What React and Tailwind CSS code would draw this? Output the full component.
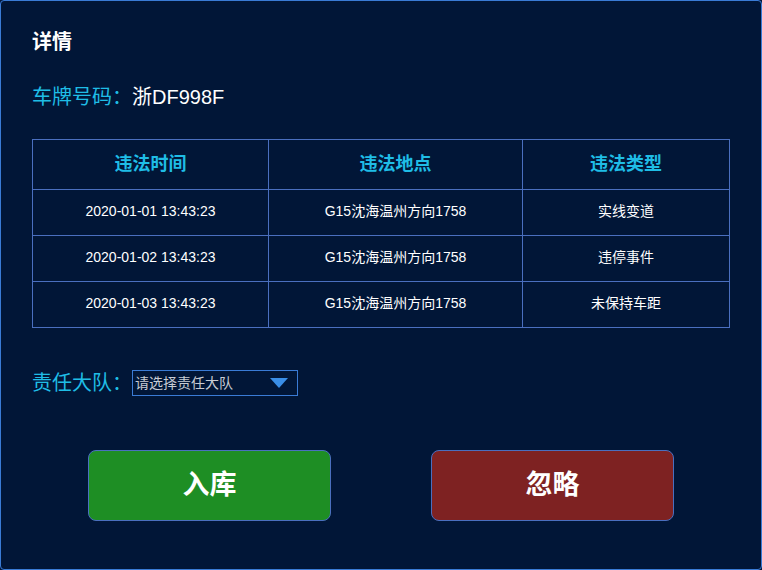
export default function App() {
  const rows = [
    ["2020-01-01 13:43:23", "G15沈海温州方向1758", "实线变道"],
    ["2020-01-02 13:43:23", "G15沈海温州方向1758", "违停事件"],
    ["2020-01-03 13:43:23", "G15沈海温州方向1758", "未保持车距"],
  ];
  const font = { fontFamily: '"Liberation Sans", "Noto Sans CJK SC", sans-serif' };
  return (
    <div style={font} className="w-[762px] h-[570px] bg-[#011637]">
      <div className="w-full h-full border border-[#3a7bd5] rounded-[4px] bg-[#011637] pl-[31px] pr-[31px] pt-[27px]">
        <div className="text-white font-bold text-[20px] leading-[28px]">详情</div>
        <div className="mt-[27px] flex items-center text-[20px] leading-[28px]">
          <span className="text-[#1fbde6]">车牌号码：</span>
          <span className="text-white">浙DF998F</span>
        </div>
        <table className="mt-[28px] w-[698px] border-collapse">
          <thead>
            <tr className="h-[50px]">
              <th className="w-[236px] border border-[#4a6fbf] text-[#1fbde6] text-[18px] font-bold">违法时间</th>
              <th className="w-[254px] border border-[#4a6fbf] text-[#1fbde6] text-[18px] font-bold">违法地点</th>
              <th className="border border-[#4a6fbf] text-[#1fbde6] text-[18px] font-bold">违法类型</th>
            </tr>
          </thead>
          <tbody>
            {rows.map((r, i) => (
              <tr key={i} className="h-[46px]">
                {r.map((c, j) => (
                  <td key={j} className="border border-[#4a6fbf] text-white text-[14px] text-center pb-[2px]">{c}</td>
                ))}
              </tr>
            ))}
          </tbody>
        </table>
        <div className="mt-[41px] flex items-center">
          <span className="text-[#1fbde6] text-[20px] leading-[28px]">责任大队：</span>
          <div className="w-[166px] h-[26px] border border-[#3a7bd5] flex items-center justify-between pl-[2px] pr-[9px]">
            <span className="text-[#c8ccd4] text-[14px]">请选择责任大队</span>
            <svg width="18" height="10" viewBox="0 0 18 10"><polygon points="0,0 18,0 9,10" fill="#3a8ee6" /></svg>
          </div>
        </div>
        <div className="mt-[53px] flex pl-[56px] gap-[100px]">
          <button className="w-[243px] h-[71px] rounded-[8px] border border-[#4a6fbf] bg-[#1e8e24] text-white font-bold text-[27px]">入库</button>
          <button className="w-[243px] h-[71px] rounded-[8px] border border-[#4a6fbf] bg-[#7e2222] text-white font-bold text-[27px]">忽略</button>
        </div>
      </div>
    </div>
  );
}
